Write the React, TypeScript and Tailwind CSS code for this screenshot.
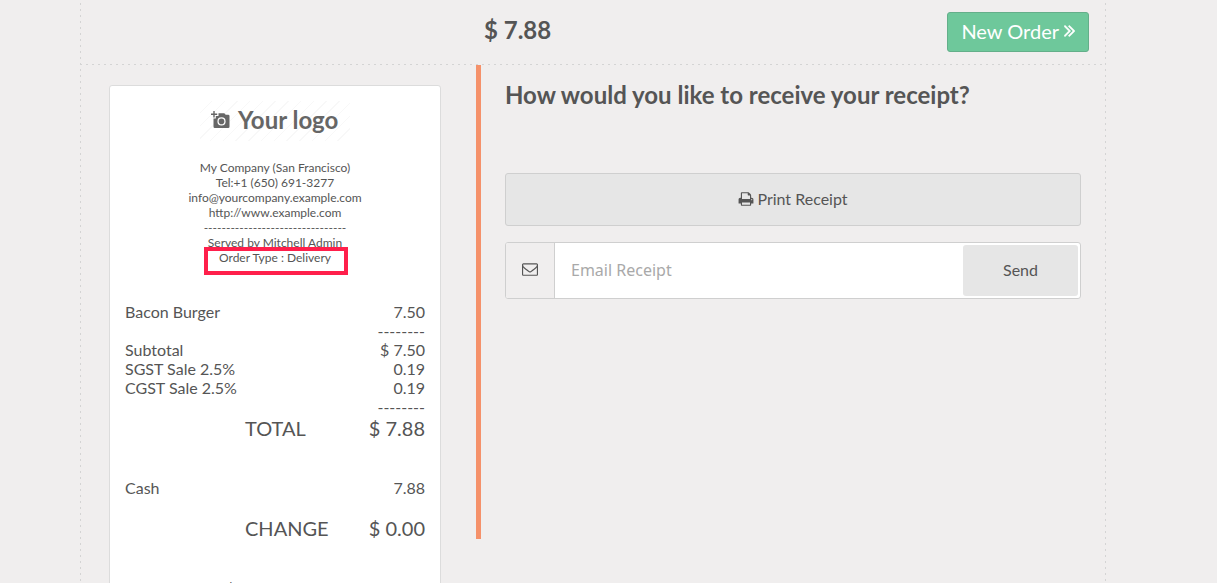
import React from "react";

function CameraIcon() {
  return (
    <svg viewBox="0 0 19 18" className="h-[18px] w-[19px]" aria-hidden="true">
      <path fill="currentColor" d="M2.300 0h1.400v2.500h2.500v1.400H3.700v2.500H2.300V3.900H0V2.500h2.300z" />
      <path
        fill="currentColor"
        fillRule="evenodd"
        d="M7.500 2.200h5.800l1.400 1.500h2.500q1.300 0 1.300 1.300v10.700q0 1.300-1.300 1.300H3.800q-1.300 0-1.300-1.300V7.500h2.300V5h2.700zM10.500 6.300a4.100 4.100 0 1 0 0 8.200 4.100 4.100 0 0 0 0-8.200z"
      />
      <circle cx="10.500" cy="10.400" r="2.800" fill="currentColor" />
    </svg>
  );
}

function PrintIcon() {
  return (
    <svg viewBox="0 0 1792 1792" className="h-4 w-4 fill-current" aria-hidden="true">
      <path d="M448 1536h896v-256h-896v256zm0-640h896v-384h-160q-40 0-68-28t-28-68v-160h-640v640zm1152 64q0-26-19-45t-45-19-45 19-19 45 19 45 45 19 45-19 19-45zm128 0v416q0 13-9.5 22.5t-22.5 9.5h-224v160q0 40-28 68t-68 28h-960q-40 0-68-28t-28-68v-160h-224q-13 0-22.5-9.5t-9.5-22.5v-416q0-79 56.5-135.5t135.5-56.5h64v-544q0-40 28-68t68-28h672q40 0 88 20t76 48l152 152q28 28 48 76t20 88v256h64q79 0 135.5 56.5t56.5 135.5z" />
    </svg>
  );
}

function EnvelopeIcon() {
  return (
    <svg viewBox="0 0 1792 1792" className="h-4 w-4 fill-current" aria-hidden="true">
      <path d="M1664 1504v-768q-32 36-69 66-268 206-426 338-51 43-83 67t-86.500 48.500-102.500 24.500h-2q-48 0-102.500-24.500t-86.500-48.500-83-67q-158-132-426-338-37-30-69-66v768q0 13 9.500 22.500t22.500 9.500h1472q13 0 22.500-9.500t9.500-22.500zm0-1051v-24.500l-.5-13-3-12.500-5.500-9-9-7.500-14-2.500h-1472q-13 0-22.500 9.500t-9.500 22.500q0 168 147 284 193 152 401 317 6 5 35 29.500t46 37.500 44.500 31.500 50.500 27.500 43 9h2q20 0 43-9t50.500-27.500 44.500-31.500 46-37.500 35-29.500q208-165 401-317 54-43 100.500-115.500t46.500-131.500zm128-37v1088q0 66-47 113t-113 47h-1472q-66 0-113-47t-47-113v-1088q0-66 47-113t113-47h1472q66 0 113 47t47 113z" />
    </svg>
  );
}

function DoubleAngleIcon() {
  return (
    <svg
      viewBox="0 0 970 1024"
      className="h-3 w-[11px] fill-current stroke-current stroke-[40]"
      aria-hidden="true"
    >
      <path d="M586 512q0 13-10 23l-466 466q-10 10-23 10t-23-10l-50-50q-10-10-10-23t10-23l393-393-393-393q-10-10-10-23t10-23l50-50q10-10 23-10t23 10l466 466q10 10 10 23z" />
      <path d="M970 512q0 13-10 23l-466 466q-10 10-23 10t-23-10l-50-50q-10-10-10-23t10-23l393-393-393-393q-10-10-10-23t10-23l50-50q10-10 23-10t23 10l466 466q10 10 10 23z" />
    </svg>
  );
}

function VerticalDashes() {
  return (
    <div className="w-px shrink-0 bg-[repeating-linear-gradient(180deg,transparent_0_3px,#d4d4d4_3px_5px,transparent_5px_6px)]" />
  );
}

function Line({ label, value }: { label?: string; value: string }) {
  return (
    <div className="flex justify-between">
      <span>{label}</span>
      <span>{value}</span>
    </div>
  );
}

function TotalLine({ label, value }: { label: string; value: string }) {
  return (
    <div className="flex justify-between pl-[40%] text-xl leading-6">
      <span>{label}</span>
      <span>{value}</span>
    </div>
  );
}

function Receipt() {
  return (
    <article className="rounded-[3px] border border-[#dcdcdc] bg-white p-[15px] pb-8 text-base leading-[19px]">
      <div className="mx-auto flex h-10 w-[150px] items-center gap-2 bg-[repeating-linear-gradient(135deg,#fff_0_8px,#f8f8f8_8px_9px)] pb-0.5 pl-[11px] text-[#666]">
        <CameraIcon />
        <span className="text-2xl leading-8 font-bold">Your logo</span>
      </div>
      <div className="mt-[19px] text-center text-xs leading-[15px]">
        <div>My Company (San Francisco)</div>
        <div>Tel:+1 (650) 691-3277</div>
        <div>info@yourcompany.example.com</div>
        <div>http://www.example.com</div>
        <div>--------------------------------</div>
        <div>Served by Mitchell Admin</div>
        <div>
          <span className="relative inline-block">
            Order Type : Delivery
            <span className="absolute -top-[3px] -right-[17px] -bottom-2.5 -left-[15px] border-4 border-[#ff1f4b]" />
          </span>
        </div>
      </div>
      <div className="mt-[37px]">
        <Line label="Bacon Burger" value="7.50" />
        <Line value="--------" />
        <Line label="Subtotal" value="$ 7.50" />
        <Line label="SGST Sale 2.5%" value="0.19" />
        <Line label="CGST Sale 2.5%" value="0.19" />
        <Line value="--------" />
        <TotalLine label="TOTAL" value="$ 7.88" />
      </div>
      <div className="mt-[38px] mb-[19px]">
        <Line label="Cash" value="7.88" />
      </div>
      <TotalLine label="CHANGE" value="$ 0.00" />
      <div className="mt-[39px] text-center text-xs leading-[15px]">
        <div>Order 00001-003-0001</div>
      </div>
    </article>
  );
}

export default function App() {
  return (
    <div className="flex h-screen overflow-hidden bg-[#f0eeee] pr-[111px] pl-20 font-['Lato',sans-serif] text-[#555]">
      <VerticalDashes />
      <div className="flex min-w-0 flex-1 flex-col">
        <header className="flex h-16 shrink-0 items-center pr-4">
          <div className="w-[395px] shrink-0" />
          <h1 className="flex-1 pb-1 pl-2 text-2xl leading-8 font-bold">$ 7.88</h1>
          <button
            type="button"
            className="flex h-10 items-center gap-[5px] rounded-[3px] border border-[#64af8a] bg-[#6ec89b] px-[13px] pb-0.5 text-xl text-white"
          >
            New Order <DoubleAngleIcon />
          </button>
        </header>
        <div className="h-px shrink-0 bg-[repeating-linear-gradient(90deg,#d4d4d4_0_1px,transparent_1px_5px,#d4d4d4_5px_6px)]" />
        <main className="flex min-h-0 flex-1 items-start">
          <section className="w-[395px] shrink-0 pt-5 pr-[35px] pl-7">
            <Receipt />
          </section>
          <section className="h-[474px] min-w-0 flex-1 border-l-[5px] border-[#f5916a] px-6 pt-[14px]">
            <h2 className="text-2xl leading-8 font-bold">How would you like to receive your receipt?</h2>
            <button
              type="button"
              className="mt-[62px] flex h-[53px] w-full items-center justify-center gap-[3px] rounded-[3px] border border-[#cfcfcf] bg-[#e6e6e6] pb-0.5 text-base"
            >
              <PrintIcon />
              Print Receipt
            </button>
            <form className="mt-4 flex h-[57px] rounded-[3px] border border-[#cfcfcf] bg-white">
              <label
                htmlFor="email"
                aria-label="Email Receipt"
                className="flex w-[49px] shrink-0 items-center justify-center rounded-l-[2px] border-r border-[#cfcfcf] bg-[#f0eeee] pb-1"
              >
                <EnvelopeIcon />
              </label>
              <input
                id="email"
                type="email"
                placeholder="Email Receipt"
                className="min-w-0 flex-1 bg-transparent px-4 pb-0.5 font-['Noto_Sans',sans-serif] text-base outline-none placeholder:text-[#a9a9a9]"
              />
              <button type="button" className="m-0.5 w-[115px] shrink-0 rounded-[3px] bg-[#e6e6e6] pb-0.5 text-base">
                Send
              </button>
            </form>
          </section>
        </main>
      </div>
      <VerticalDashes />
    </div>
  );
}
